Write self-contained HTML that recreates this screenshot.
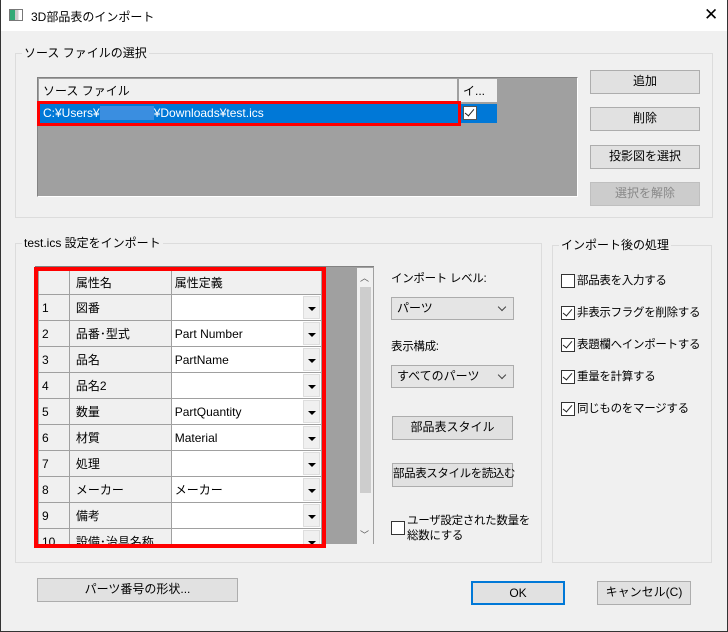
<!DOCTYPE html>
<html><head><meta charset="utf-8"><style>
*{box-sizing:border-box;margin:0;padding:0}
body{width:728px;height:632px;overflow:hidden;background:#f0f0f0;font-family:"Liberation Sans","Noto Sans CJK JP",sans-serif;font-size:12px;color:#000;position:relative}
.a{position:absolute}
.win{position:absolute;left:0;top:0;width:728px;height:632px;border:1px solid #333;border-top:none}
.title{left:0;top:0;width:728px;height:31px;background:#fff}
.grp{border:1px solid #dcdcdc}
.lbl{background:#f0f0f0;padding:0 2px;white-space:nowrap;line-height:14px}
.btn{background:#e1e1e1;border:1px solid #adadad;text-align:center;white-space:nowrap;line-height:21px}
.combo{background:#e5e5e5;border:1px solid #acacac;padding-left:5px;line-height:21px}
.combo:after{content:"";position:absolute;right:8px;top:6px;width:5px;height:5px;border-right:1px solid #444;border-bottom:1px solid #444;transform:rotate(45deg)}
.cb{width:14px;height:14px;border:1px solid #333;background:#fff}
.cb.c:after{content:"";position:absolute;left:3px;top:0px;width:4px;height:8px;border-right:1.5px solid #222;border-bottom:1.5px solid #222;transform:rotate(40deg)}
.ct{white-space:nowrap;line-height:14px;font-size:11.5px;letter-spacing:-0.3px}
table{border-collapse:collapse;font-size:12px}
td{border:1px solid #a0a0a0;height:26px;padding:0 3px;white-space:nowrap;overflow:hidden}
td.n{background:#f0f0f0;width:31px}
td.m{background:#f0f0f0;width:102px;padding-left:6px}
td.d{background:#fff;width:151px;position:relative}
td.h{background:#f0f0f0;border-color:#a0a0a0;height:25px}
td.d i{position:absolute;right:1px;top:1px;width:17px;height:23px;background:#f0f0f0;border:1px solid #ddd}
td.d i:after{content:"";position:absolute;left:4px;top:10px;border-left:4px solid transparent;border-right:4px solid transparent;border-top:4px solid #000}
</style></head><body>
<div class="a title"></div>
<div class="a" style="left:9px;top:9px;width:14px;height:12px;border:1px solid #777;background:linear-gradient(90deg,#3a7 0 40%,#ccc 40% 70%,#fff 70%)"></div>
<div class="a" style="left:31px;top:8px">3D部品表のインポート</div>
<div class="a" style="left:704px;top:5px;font-size:17px;line-height:20px;font-weight:300">✕</div>
<div class="win"></div>

<!-- group 1 -->
<div class="a grp" style="left:15px;top:53px;width:698px;height:165px"></div>
<div class="a lbl" style="left:22px;top:46px">ソース ファイルの選択</div>
<div class="a" style="left:37px;top:77px;width:541px;height:120px;background:#a0a0a0;border:1px solid #828282;border-right-color:#fff;border-bottom-color:#fff"></div>
<div class="a" style="left:39px;top:79px;width:419px;height:24px;background:#f0f0f0;border-right:1px solid #a0a0a0;border-bottom:1px solid #a0a0a0;padding:5px 4px;line-height:14px">ソース ファイル</div>
<div class="a" style="left:458px;top:79px;width:40px;height:24px;background:#f0f0f0;border:1px solid #a0a0a0;border-top:none;padding:5px 4px;line-height:14px">イ...</div>
<div class="a" style="left:39px;top:104px;width:458px;height:19px;background:#0078d7"></div>
<div class="a" style="left:43px;top:106px;color:#fff;line-height:14px">C:¥Users¥<span style="display:inline-block;width:54px;height:14px;background:#3a8ee0;vertical-align:top"></span>¥Downloads¥test.ics</div>
<div class="a" style="left:37px;top:101px;width:424px;height:25px;border:3px solid #f00"></div>
<div class="a cb c" style="left:463px;top:106px;border-color:#555"></div>
<div class="a btn" style="left:590px;top:70px;width:110px;height:24px">追加</div>
<div class="a btn" style="left:590px;top:107px;width:110px;height:24px">削除</div>
<div class="a btn" style="left:590px;top:145px;width:110px;height:24px">投影図を選択</div>
<div class="a btn" style="left:590px;top:182px;width:110px;height:24px;background:#ccc;border-color:#bfbfbf;color:#888">選択を解除</div>

<!-- group 2 -->
<div class="a grp" style="left:15px;top:243px;width:527px;height:320px"></div>
<div class="a lbl" style="left:22px;top:236px">test.ics 設定をインポート</div>
<div class="a" style="left:35px;top:266px;width:339px;height:278px;background:#a0a0a0;border-top:1px solid #828282"></div>
<div class="a" style="left:357px;top:268px;width:16px;height:276px;background:#f0f0f0"></div>
<div class="a" style="left:360px;top:287px;width:11px;height:206px;background:#cdcdcd"></div>
<div class="a" style="left:360px;top:271px;font-size:9px;color:#555">︿</div>
<div class="a" style="left:360px;top:528px;font-size:9px;color:#555">﹀</div>
<div class="a" style="left:38px;top:269px;width:284px;height:275px;overflow:hidden">
<table>
<tr><td class="n h"></td><td class="m h">属性名</td><td class="d h" style="background:#f0f0f0">属性定義</td></tr>
<tr><td class="n">1</td><td class="m">図番</td><td class="d"><i></i></td></tr>
<tr><td class="n">2</td><td class="m">品番･型式</td><td class="d">Part Number<i></i></td></tr>
<tr><td class="n">3</td><td class="m">品名</td><td class="d">PartName<i></i></td></tr>
<tr><td class="n">4</td><td class="m">品名2</td><td class="d"><i></i></td></tr>
<tr><td class="n">5</td><td class="m">数量</td><td class="d">PartQuantity<i></i></td></tr>
<tr><td class="n">6</td><td class="m">材質</td><td class="d">Material<i></i></td></tr>
<tr><td class="n">7</td><td class="m">処理</td><td class="d"><i></i></td></tr>
<tr><td class="n">8</td><td class="m">メーカー</td><td class="d">メーカー<i></i></td></tr>
<tr><td class="n">9</td><td class="m">備考</td><td class="d"><i></i></td></tr>
<tr><td class="n">10</td><td class="m">設備･治具名称</td><td class="d"><i></i></td></tr>
</table></div>
<div class="a" style="left:34px;top:267px;width:292px;height:281px;border:4px solid #f00"></div>

<div class="a ct" style="left:391px;top:272px">インポート レベル:</div>
<div class="a combo" style="left:391px;top:297px;width:123px;height:23px">パーツ</div>
<div class="a ct" style="left:391px;top:340px">表示構成:</div>
<div class="a combo" style="left:391px;top:365px;width:123px;height:23px">すべてのパーツ</div>
<div class="a btn" style="left:392px;top:416px;width:121px;height:24px">部品表スタイル</div>
<div class="a btn" style="left:392px;top:463px;width:121px;height:24px;font-size:11.5px;letter-spacing:-0.4px">部品表スタイルを読込む</div>
<div class="a cb" style="left:391px;top:521px"></div>
<div class="a ct" style="left:407px;top:514px;line-height:15px">ユーザ設定された数量を<br>総数にする</div>

<div class="a grp" style="left:552px;top:245px;width:160px;height:318px"></div>
<div class="a lbl" style="left:559px;top:238px">インポート後の処理</div>
<div class="a cb" style="left:561px;top:274px"></div><div class="a ct" style="left:577px;top:274px">部品表を入力する</div>
<div class="a cb c" style="left:561px;top:306px"></div><div class="a ct" style="left:577px;top:306px">非表示フラグを削除する</div>
<div class="a cb c" style="left:561px;top:338px"></div><div class="a ct" style="left:577px;top:338px">表題欄へインポートする</div>
<div class="a cb c" style="left:561px;top:370px"></div><div class="a ct" style="left:577px;top:370px">重量を計算する</div>
<div class="a cb c" style="left:561px;top:402px"></div><div class="a ct" style="left:577px;top:402px">同じものをマージする</div>

<div class="a btn" style="left:37px;top:578px;width:201px;height:24px">パーツ番号の形状...</div>
<div class="a btn" style="left:471px;top:581px;width:94px;height:24px;border:2px solid #0078d7;line-height:20px">OK</div>
<div class="a btn" style="left:597px;top:581px;width:94px;height:24px">キャンセル(C)</div>
</body></html>
